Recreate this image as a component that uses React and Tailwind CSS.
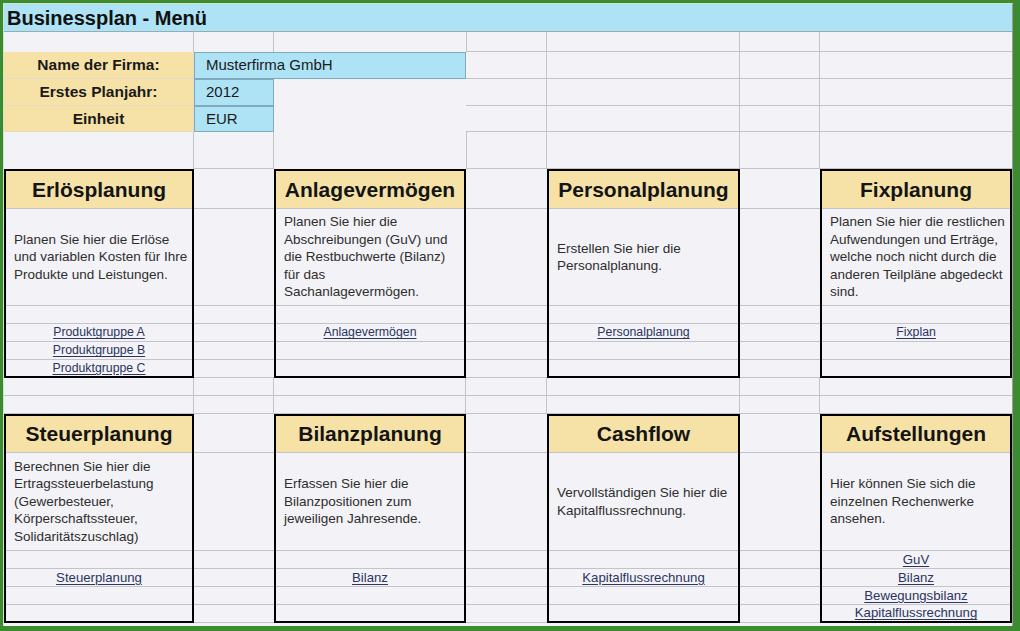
const GRID = "border-[#c4c4c8]";

const RIGHT_CELLS = [
  `border-l border-r border-b ${GRID}`,
  `border-r border-b ${GRID}`,
  `border-r border-b ${GRID}`,
  `border-b ${GRID}`,
];

const RIGHT_CELLS_OPEN = [
  `border-r border-b ${GRID}`,
  `border-r border-b ${GRID}`,
  `border-r border-b ${GRID}`,
  `border-b ${GRID}`,
];

const TOP_CARDS = [
  {
    place: "col-start-1 row-start-6",
    title: "Erlösplanung",
    lines: ["Planen Sie hier die Erlöse", "und variablen Kosten für Ihre", "Produkte und Leistungen."],
    links: [null, "Produktgruppe A", "Produktgruppe B", "Produktgruppe C"],
  },
  {
    place: "col-start-3 row-start-6",
    title: "Anlagevermögen",
    lines: ["Planen Sie hier die", "Abschreibungen (GuV) und", "die Restbuchwerte (Bilanz)", "für das", "Sachanlagevermögen."],
    links: [null, "Anlagevermögen", null, null],
  },
  {
    place: "col-start-5 row-start-6",
    title: "Personalplanung",
    lines: ["Erstellen Sie hier die", "Personalplanung."],
    links: [null, "Personalplanung", null, null],
  },
  {
    place: "col-start-7 row-start-6",
    title: "Fixplanung",
    lines: ["Planen Sie hier die restlichen", "Aufwendungen und Erträge,", "welche noch nicht durch die", "anderen Teilpläne abgedeckt", "sind."],
    links: [null, "Fixplan", null, null],
  },
];

const BOTTOM_CARDS = [
  {
    place: "col-start-1 row-start-14",
    title: "Steuerplanung",
    lines: ["Berechnen Sie hier die", "Ertragssteuerbelastung", "(Gewerbesteuer,", "Körperschaftssteuer,", "Solidaritätszuschlag)"],
    links: [null, "Steuerplanung", null, null],
  },
  {
    place: "col-start-3 row-start-14",
    title: "Bilanzplanung",
    lines: ["Erfassen Sie hier die", "Bilanzpositionen zum", "jeweiligen Jahresende."],
    links: [null, "Bilanz", null, null],
  },
  {
    place: "col-start-5 row-start-14",
    title: "Cashflow",
    lines: ["Vervollständigen Sie hier die", "Kapitalflussrechnung."],
    links: [null, "Kapitalflussrechnung", null, null],
  },
  {
    place: "col-start-7 row-start-14",
    title: "Aufstellungen",
    lines: ["Hier können Sie sich die", "einzelnen Rechenwerke", "ansehen."],
    links: ["GuV", "Bilanz", "Bewegungsbilanz", "Kapitalflussrechnung"],
  },
];

function Card({ place, title, lines, links, bottom }) {
  return (
    <div className={`${place} row-span-6 flex flex-col border-2 border-black`}>
      <div
        className={`${bottom ? "h-[37px]" : "h-[38px]"} flex items-center justify-center border-b ${GRID} bg-[#f6e2a6] text-[21px] font-bold text-[#141414]`}
      >
        {title}
      </div>
      <div
        className={`${bottom ? "h-[98px]" : "h-[97px]"} flex flex-col justify-center border-b ${GRID} px-[8px] text-[13.5px] leading-[17.5px] text-[#2e2e2e]`}
      >
        {lines.map((l) => (
          <div key={l} className="whitespace-nowrap">{l}</div>
        ))}
      </div>
      {links.map((link, i) => (
        <div
          key={i}
          className={`${i === 3 ? "flex-1" : `h-[18px] border-b ${GRID}`} flex items-center justify-center ${bottom ? "text-[13.2px]" : "text-[12.3px]"} leading-none text-[#2a3560]`}
        >
          {link && <span className="underline underline-offset-2 decoration-[#2a3560]">{link}</span>}
        </div>
      ))}
    </div>
  );
}

function GapRows({ count }) {
  const cells = [];
  for (let r = 0; r < count; r++) {
    for (let c = 0; c < 3; c++) {
      cells.push(<div key={`${r}-${c}`} className={`border-b ${GRID}`} />);
    }
  }
  return cells;
}

function RightCells({ row, open }) {
  return (open ? RIGHT_CELLS_OPEN : RIGHT_CELLS).map((cls, i) => <div key={`${row}-${i}`} className={cls} />);
}

const LABEL = `flex items-center justify-center border-r border-b border-[#e4dcc4] bg-[#f6e2a6] text-[15.5px] font-bold text-[#1a1a1a]`;
const BLUE = `flex items-center border border-[#7fa9bd] bg-[#ade3f5] pl-[11px] text-[15px] text-[#1a1a1a]`;

export default function App() {
  return (
    <div className="h-[631px] w-[1020px] bg-[#3d8b30] pl-[3px] pt-[3px] font-['Liberation_Sans',Arial,sans-serif]">
      <div className="h-[623px] w-[1010px] border-l border-t border-r border-[#9c9c9c] border-l-[#cfe6c4] border-t-[#cfe6c4] bg-[#f3f2f6]">
        <div className="flex h-[28px] items-center border-b border-[#98aab2] bg-[#ade3f5] pl-[3px] text-[20px] font-bold text-[#111]">
          Businessplan - Menü
        </div>

        <div className="grid grid-cols-[190px_80px_192px_81px_193px_80px_192px] grid-rows-[20px_27px_27px_26px_37px_40px_97px_18px_18px_18px_18px_18px_18px_39px_98px_18px_18px_18px_18px]">
          {TOP_CARDS.map((c) => (
            <Card key={c.title} {...c} />
          ))}
          {BOTTOM_CARDS.map((c) => (
            <Card key={c.title} {...c} bottom />
          ))}

          {/* row 1 */}
          <div className={`border-r ${GRID}`} />
          <div className={`border-r ${GRID}`} />
          <div />
          <RightCells row="r1" />

          {/* row 2 */}
          <div className={LABEL}>Name der Firma:</div>
          <div className={`col-span-2 ${BLUE}`}>Musterfirma GmbH</div>
          <RightCells row="r2" open />

          {/* row 3 */}
          <div className={LABEL}>Erstes Planjahr:</div>
          <div className={BLUE}>2012</div>
          <div />
          <RightCells row="r3" open />

          {/* row 4 */}
          <div className={LABEL}>Einheit</div>
          <div className={BLUE}>EUR</div>
          <div />
          <RightCells row="r4" open />

          {/* row 5 */}
          <div className={`border-r ${GRID}`} />
          <div className={`border-r border-b ${GRID}`} />
          <div />
          <RightCells row="r5" />

          {/* first card band */}
          <GapRows count={6} />

          {/* spacer rows */}
          {[0, 1].map((r) => (
            <div key={r} className="contents">
              <div className={`border-r border-b ${GRID}`} />
              <div className={`border-r border-b ${GRID}`} />
              <div className={`border-r border-b ${GRID}`} />
              <div className={`border-r border-b ${GRID}`} />
              <div className={`border-r border-b ${GRID}`} />
              <div className={`border-r border-b ${GRID}`} />
              <div className={`border-b ${GRID}`} />
            </div>
          ))}

          {/* second card band */}
          <GapRows count={6} />
        </div>
      </div>
    </div>
  );
}
